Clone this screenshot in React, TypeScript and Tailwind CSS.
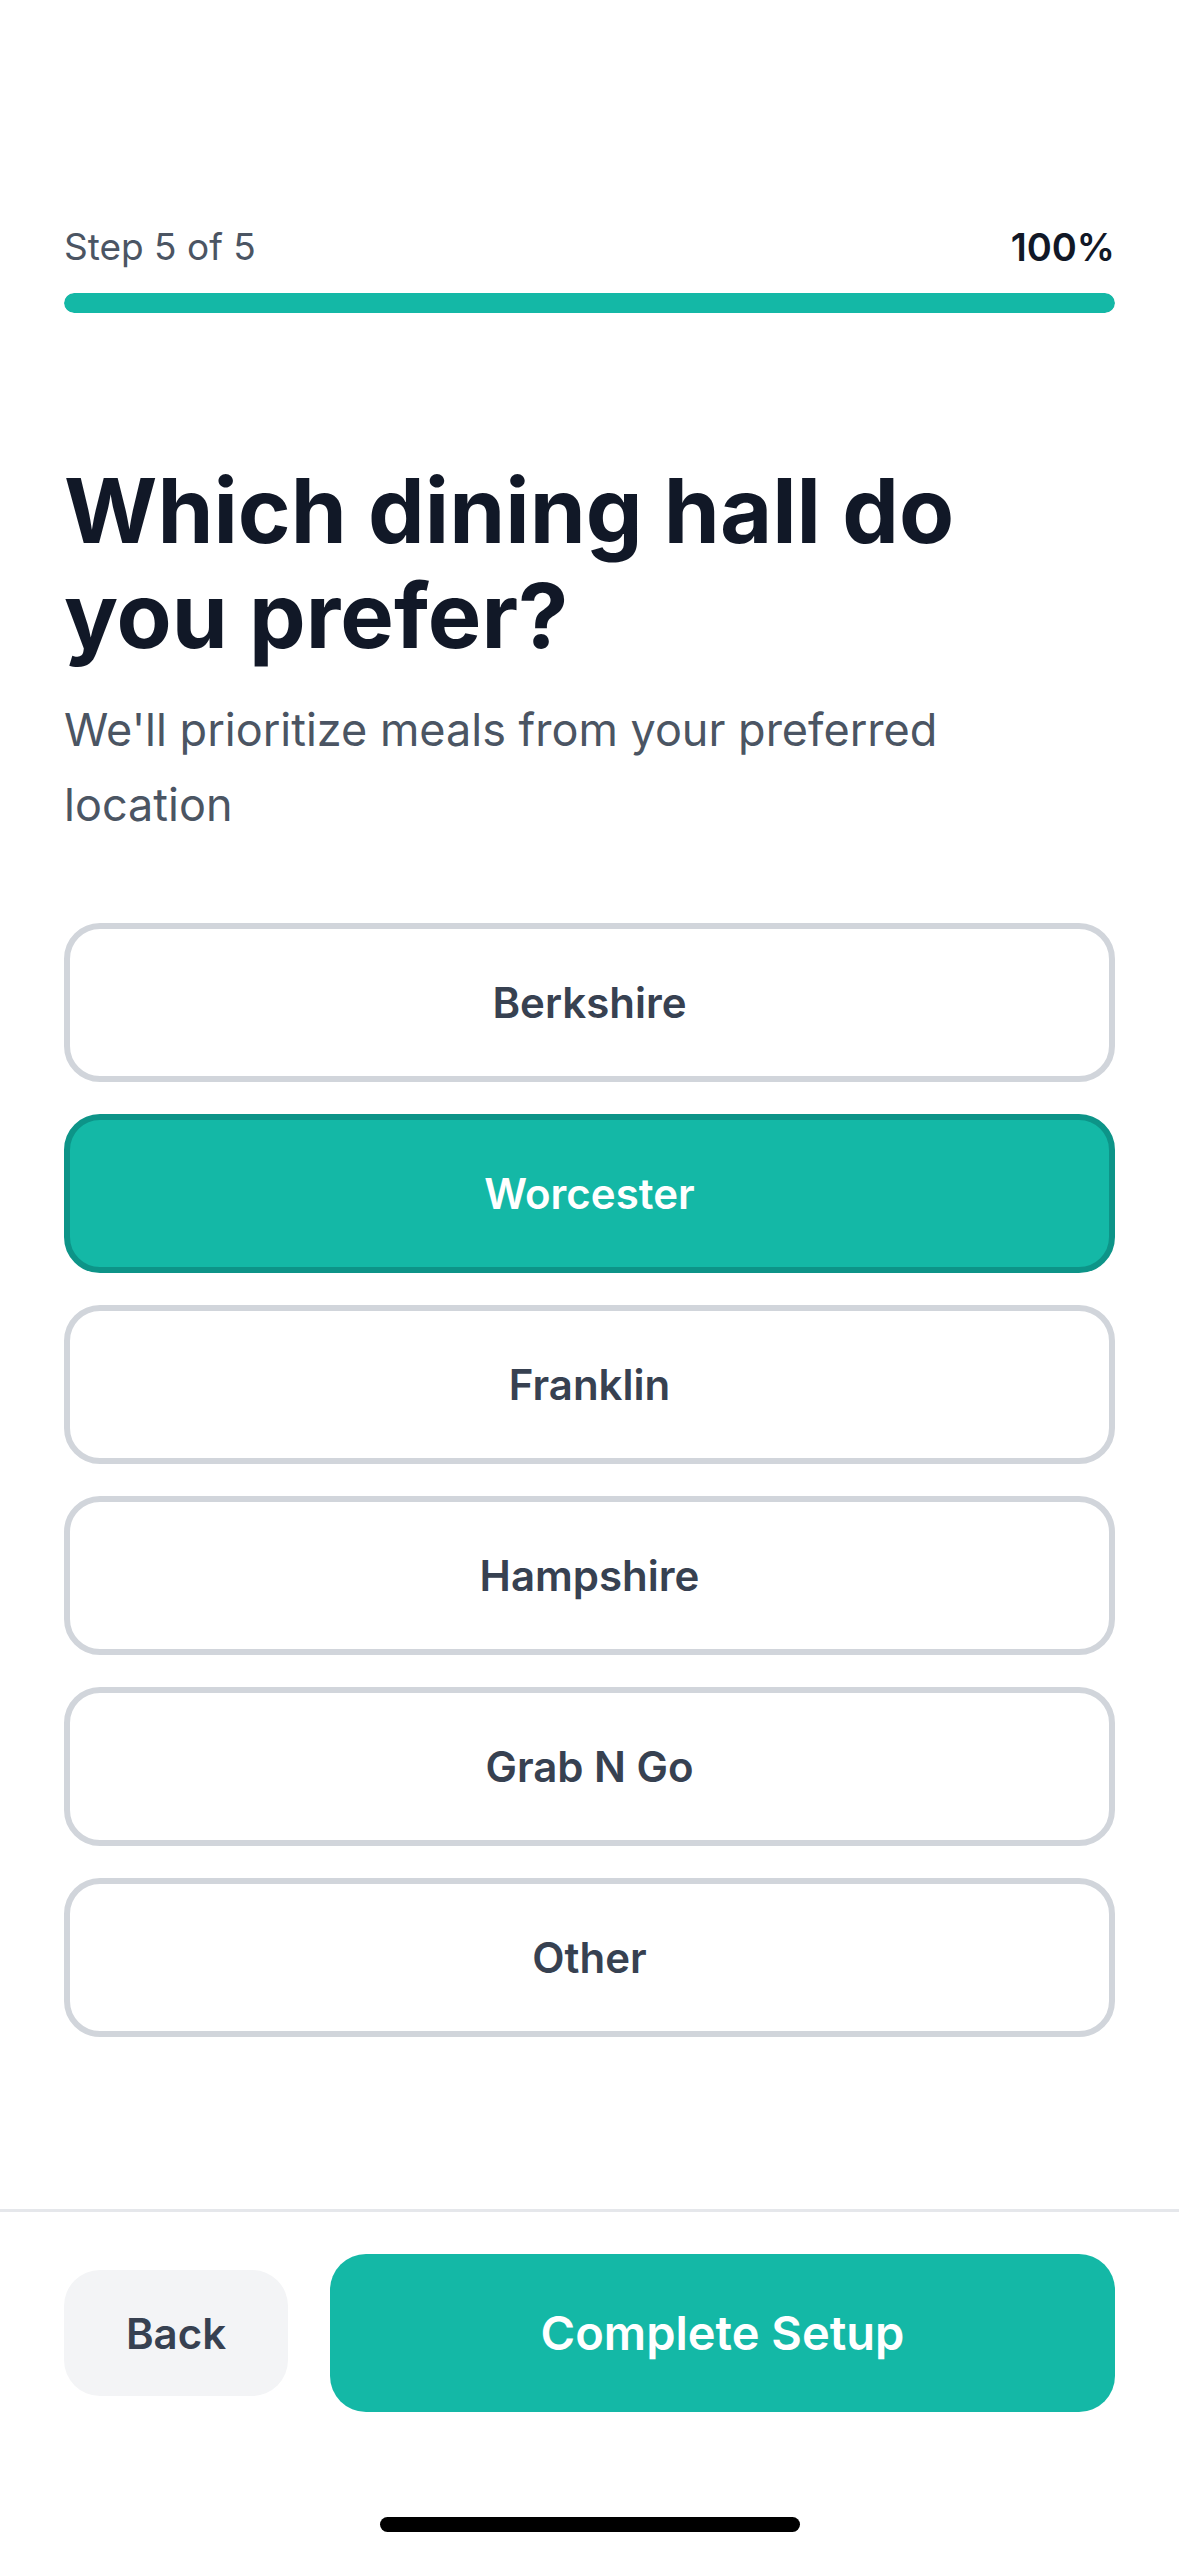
import { useState } from 'react';

const HALLS = ['Berkshire', 'Worcester', 'Franklin', 'Hampshire', 'Grab N Go', 'Other'];

export default function App() {
  const [selected, setSelected] = useState('Worcester');

  return (
    <div className="w-[1179px] h-[2556px] bg-white flex flex-col font-['Inter','Noto_Sans',sans-serif]">
      {/* Body */}
      <div className="flex-1 px-[64px] pt-[223px]">
        <div className="flex items-center justify-between leading-[48px]">
          <span className="text-[37px] text-[#4b5563]">Step 5 of 5</span>
          <span className="text-[38px] font-semibold text-[#111827]">100%</span>
        </div>
        <div className="mt-[22px] h-[20px] w-full rounded-full bg-[#e5e7eb] overflow-hidden">
          <div className="h-full w-full rounded-full bg-[#14b8a6]" />
        </div>

        <h1 className="mt-[145px] text-[90px] leading-[105px] font-bold text-[#111827]">
          Which dining hall do you prefer?
        </h1>
        <p className="mt-[24px] text-[45px] leading-[75px] text-[#4b5563]">
          We'll prioritize meals from your preferred location
        </p>

        <div className="mt-[81px] flex flex-col gap-[32px]">
          {HALLS.map((h) => {
            const active = h === selected;
            return (
              <button
                key={h}
                onClick={() => setSelected(h)}
                className={
                  active
                    ? 'h-[159px] rounded-[36px] border-[6px] border-[#0d9488] bg-[#14b8a6] text-[42px] font-semibold text-white'
                    : 'h-[159px] rounded-[36px] border-[6px] border-[#d1d5db] bg-white text-[42px] font-semibold text-[#374151]'
                }
              >
                {h}
              </button>
            );
          })}
        </div>
      </div>

      {/* Footer */}
      <div className="border-t-[3px] border-[#e5e7eb]">
        <div className="flex items-center gap-[42px] px-[64px] pt-[42px]">
          <button className="h-[126px] w-[224px] rounded-[36px] bg-[#f3f4f6] text-[42px] font-semibold text-[#374151]">
            Back
          </button>
          <button className="h-[158px] flex-1 rounded-[36px] bg-[#14b8a6] text-[47px] font-semibold text-white">
            Complete Setup
          </button>
        </div>
        <div className="flex justify-center pt-[105px] pb-[24px]">
          <div className="h-[15px] w-[420px] rounded-full bg-black" />
        </div>
      </div>
    </div>
  );
}
